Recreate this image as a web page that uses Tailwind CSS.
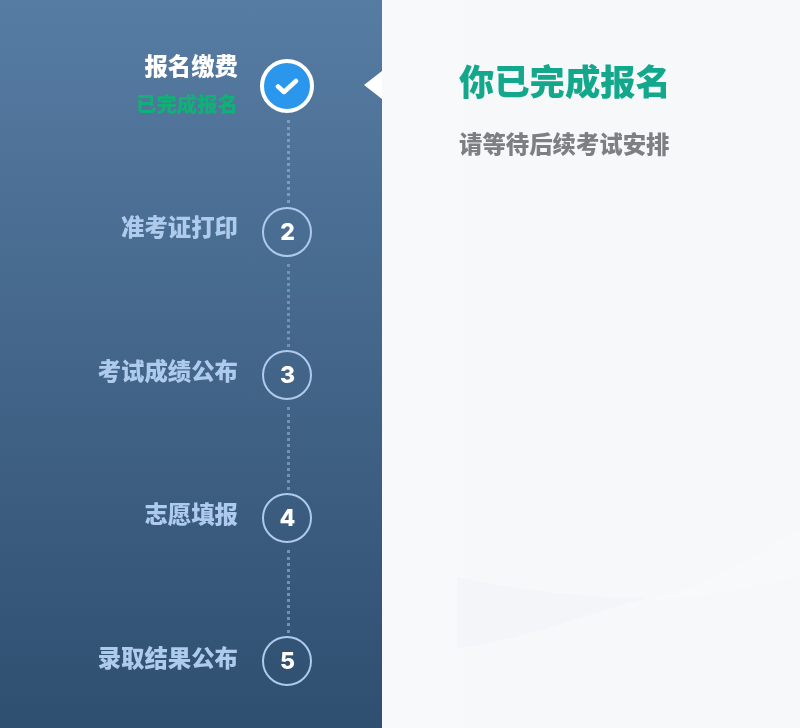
<!DOCTYPE html>
<html lang="zh-CN">
<head>
    <meta charset="UTF-8">
    <meta name="viewport" content="width=device-width, initial-scale=1.0">
    <title>报名缴费</title>
    <script src="https://cdn.jsdelivr.net/npm/@tailwindcss/browser@4"></script>
</head>
<body class="bg-[#f6f8fa] [font-family:Inter,'Noto_Sans_CJK_SC',sans-serif]">
    <div class="flex h-[728px] w-[800px] overflow-hidden blur-[0.7px]">

        <!-- Steps -->
        <aside class="flex h-full w-[382px] shrink-0 flex-col items-end bg-linear-to-b from-[#577ca3] to-[#2f4f70] pt-[59px] pr-[68px]">
            <div class="flex h-[54px] items-center">
                <div class="mr-[22px] flex flex-col items-end font-black">
                    <span class="text-[23.4px] leading-[30px] text-white">报名缴费</span>
                    <span class="mt-2 text-[20.4px] leading-[30px] text-[#12b078]">已完成报名</span>
                </div>
                <div class="flex h-[54px] w-[54px] items-center justify-center rounded-full border-4 border-white bg-[#2b97ec]">
                    <svg width="24" height="20" viewBox="0 0 24 20" fill="none" stroke="#fff" stroke-width="4.5" stroke-linecap="round" stroke-linejoin="round"><path d="M3 10.5 9 16 21 5"/></svg>
                </div>
            </div>
            <div class="mt-[7px] mb-1 mr-[24px] h-[83px] border-l-[3.5px] border-dotted border-[#7f9abb]"></div>

            <div class="flex h-[50px] items-center">
                <span class="mr-[22px] mb-2 text-[23.4px] font-black text-[#aecaec]">准考证打印</span>
                <div class="flex w-[54px] justify-center">
                    <div class="flex h-[50px] w-[50px] items-center justify-center rounded-full border-[2.5px] border-[#aecaec] pl-px text-[23px] font-extrabold text-white">2</div>
                </div>
            </div>
            <div class="mt-[7px] mb-[3px] mr-[24px] h-[83px] border-l-[3.5px] border-dotted border-[#7391b3]"></div>

            <div class="flex h-[50px] items-center">
                <span class="mr-[22px] mb-1.5 text-[23.4px] font-black text-[#aecaec]">考试成绩公布</span>
                <div class="flex w-[54px] justify-center">
                    <div class="flex h-[50px] w-[50px] items-center justify-center rounded-full border-[2.5px] border-[#aecaec] pl-px text-[23px] font-extrabold text-white">3</div>
                </div>
            </div>
            <div class="mt-[7px] mb-[3px] mr-[24px] h-[83px] border-l-[3.5px] border-dotted border-[#7391b3]"></div>

            <div class="flex h-[50px] items-center">
                <span class="mr-[22px] mb-1.5 text-[23.4px] font-black text-[#aecaec]">志愿填报</span>
                <div class="flex w-[54px] justify-center">
                    <div class="flex h-[50px] w-[50px] items-center justify-center rounded-full border-[2.5px] border-[#aecaec] pl-px text-[23px] font-extrabold text-white">4</div>
                </div>
            </div>
            <div class="mt-[7px] mb-[3px] mr-[24px] h-[83px] border-l-[3.5px] border-dotted border-[#7391b3]"></div>

            <div class="flex h-[50px] items-center">
                <span class="mr-[22px] mb-1 text-[23.4px] font-black text-[#aecaec]">录取结果公布</span>
                <div class="flex w-[54px] justify-center">
                    <div class="flex h-[50px] w-[50px] items-center justify-center rounded-full border-[2.5px] border-[#aecaec] pl-px text-[23px] font-extrabold text-white">5</div>
                </div>
            </div>
        </aside>

        <!-- Result -->
        <main class="relative flex-1 bg-[#f6f8fa] pt-[59px] pl-[77px]">
            <div class="absolute top-[71px] left-[-18px] h-0 w-0 border-y-[14px] border-r-[18px] border-y-transparent border-r-white"></div>
            <div class="absolute inset-y-0 left-0 w-[73px] bg-[#f7f9fa]"></div>
            <div class="absolute inset-y-0 left-[73px] w-[8px] bg-[#f8f9fb]"></div>
            <svg class="absolute top-[520px] left-[75px]" width="343" height="140" viewBox="0 0 343 140" fill="none">
                <path d="M190 78C240 74 290 38 343 10V55C290 70 240 78 190 80Z" fill="#f8f9fb"/>
                <path d="M0 57C60 70 130 78 190 78C140 90 70 120 0 128Z" fill="#f4f5f8"/>
            </svg>
            <div class="relative">
                <h1 class="text-[35.3px] leading-[48px] font-black text-[#13a88c]">你已完成报名</h1>
                <p class="mt-5 text-[23.4px] leading-[36px] font-black text-[#7d7f83]">请等待后续考试安排</p>
            </div>
        </main>
    </div>
</body>
</html>
